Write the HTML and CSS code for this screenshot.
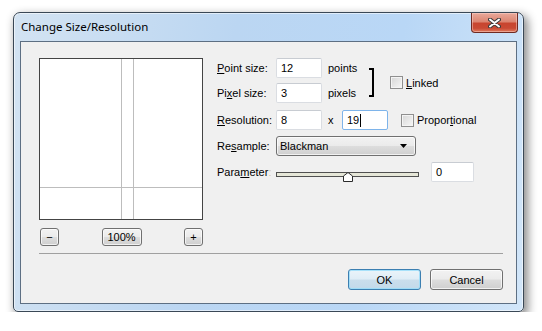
FILE: index.html
```html
<!DOCTYPE html>
<html lang="en">
<head>
    <meta charset="UTF-8">
    <title>Change Size/Resolution</title>
    <link rel="stylesheet" href="styles.css">
</head>
<body>
    <div class="window">
        <div class="titlebar">
            <span class="title">Change Size/Resolution</span>
            <button class="close" title="Close">
                <svg width="13" height="10" viewBox="0 0 13 10">
                    <path d="M2 1.5 L11 8.5 M11 1.5 L2 8.5" stroke="#3b3b3b" stroke-width="4" stroke-linecap="round"/>
                    <path d="M2 1.5 L11 8.5 M11 1.5 L2 8.5" stroke="#fff" stroke-width="2" stroke-linecap="round"/>
                </svg>
            </button>
        </div>

        <div class="client">
            <div class="main">
                <!-- glyph preview -->
                <div class="preview-col">
                    <div class="preview">
                        <svg width="162" height="160">
                            <line x1="81.5" y1="0" x2="81.5" y2="160" stroke="#bdbdbd"/>
                            <line x1="93.5" y1="0" x2="93.5" y2="160" stroke="#bdbdbd"/>
                            <line x1="0" y1="128.5" x2="162" y2="128.5" stroke="#bdbdbd"/>
                        </svg>
                    </div>
                    <div class="zoom-row">
                        <button class="btn small">&minus;</button>
                        <button class="btn small wide">100%</button>
                        <button class="btn small">+</button>
                    </div>
                </div>

                <div class="form">
                    <div class="linked-group">
                        <div class="rows">
                            <div class="row">
                                <span class="label"><u>P</u>oint size:</span>
                                <span class="field">12</span>
                                <span class="unit">points</span>
                            </div>
                            <div class="row second">
                                <span class="label">Pi<u>x</u>el size:</span>
                                <span class="field">3</span>
                                <span class="unit">pixels</span>
                            </div>
                        </div>
                        <div class="bracket"></div>
                        <label class="check linked"><span class="box"></span><u>L</u>inked</label>
                    </div>

                    <div class="row res">
                        <span class="label"><u>R</u>esolution:</span>
                        <span class="field">8</span>
                        <span class="times">x</span>
                        <span class="field focus">19<span class="caret"></span></span>
                        <label class="check prop"><span class="box"></span>Propor<u>t</u>ional</label>
                    </div>

                    <div class="row gap6">
                        <span class="label">Re<u>s</u>ample:</span>
                        <div class="select">
                            <span>Blackman</span>
                            <svg width="7" height="4" viewBox="0 0 7 4"><path d="M0 0 H7 L3.5 4 Z" fill="#000"/></svg>
                        </div>
                    </div>

                    <div class="row gap6">
                        <span class="label">Para<u>m</u>eter<span class="colon">:</span></span>
                        <div class="slider">
                            <div class="track"></div>
                            <svg class="thumb" width="10" height="10" viewBox="0 0 10 10">
                                <path d="M0.5 4 L5 0.5 L9.5 4 V9.5 H0.5 Z" fill="#fff" stroke="#2b2b2b"/>
                            </svg>
                        </div>
                        <span class="field param">0</span>
                    </div>
                </div>
            </div>

            <div class="separator"></div>

            <div class="actions">
                <button class="btn default">OK</button>
                <button class="btn">Cancel</button>
            </div>
        </div>
    </div>
</body>
</html>
```

FILE: styles.css
```css
body {
    margin: 0;
    padding: 12px 0 0 13px;
    background: #fff;
    font-family: "Liberation Sans", Arial, sans-serif;
    font-size: 11px;
    color: #000;
}

.window {
    box-sizing: border-box;
    width: 511px;
    height: 300px;
    border: 1px solid #3a4856;
    border-radius: 7px 7px 5px 5px;
    background: linear-gradient(100deg, #d3e3f2 0%, #bbd6f2 40%, #b9d7f6 70%, #d2e6f9 100%);
    box-shadow: inset 0 0 0 1px rgba(255, 255, 255, 0.55), 3px 4px 10px 1px rgba(0, 0, 0, 0.45);
}

.titlebar {
    height: 28px;
    display: flex;
    justify-content: space-between;
    align-items: flex-start;
}

.title {
    font-family: "Noto Sans", sans-serif;
    font-size: 11.5px;
    line-height: 28px;
    padding-left: 7px;
    color: #000;
}

.close {
    width: 47px;
    height: 20px;
    margin-right: 5px;
    padding: 0;
    border: 1px solid #6f2a22;
    border-top: none;
    border-radius: 0 0 4px 4px;
    background: linear-gradient(#e9a99b 0%, #dc8672 45%, #c8452f 55%, #c94a34 80%, #e07b5f 100%);
    box-shadow: inset 0 0 0 1px rgba(255, 220, 210, 0.45);
    display: flex;
    align-items: center;
    justify-content: center;
}

.client {
    box-sizing: border-box;
    width: 497px;
    height: 263px;
    margin: 0 6px 0 6px;
    border: 1px solid #5d6f83;
    background: #f0f0f0;
}

.main {
    display: flex;
    padding: 16px 0 0 18px;
}

.preview-col {
    width: 164px;
}

.preview {
    width: 162px;
    height: 160px;
    border: 1px solid #444;
    background: #fff;
}

.preview svg {
    display: block;
}

.zoom-row {
    display: flex;
    justify-content: space-between;
    margin-top: 8px;
    padding-left: 1px;
}

.btn {
    box-sizing: border-box;
    width: 73px;
    height: 21px;
    padding: 0;
    border: 1px solid #707070;
    border-radius: 3px;
    background: linear-gradient(#f2f2f2 0%, #ebebeb 48%, #dddddd 52%, #cfcfcf 100%);
    box-shadow: inset 0 0 0 1px rgba(255, 255, 255, 0.7);
    font-family: "Liberation Sans", Arial, sans-serif;
    font-size: 11px;
    color: #000;
}

.btn.small {
    width: 19px;
    height: 18px;
    font-size: 11px;
    line-height: 14px;
}

.btn.small.wide {
    width: 40px;
}

.btn.default {
    border-color: #3c7fb1;
    background: linear-gradient(#eaf4fa 0%, #dfedf6 48%, #cadeec 52%, #c2d9ea 100%);
    box-shadow: inset 0 0 0 1px rgba(150, 220, 250, 0.8);
}

.form {
    margin-left: 14px;
}

.linked-group {
    display: flex;
    align-items: flex-start;
}

.rows {
    width: 152px;
}

.row {
    display: flex;
    align-items: center;
    height: 20px;
}

.row.second {
    margin-top: 5px;
}

.row.res {
    margin-top: 7px;
}

.row.gap6 {
    margin-top: 6px;
}

.label {
    width: 59px;
    flex-shrink: 0;
}

.colon {
    color: #d9c9a0;
}

.field {
    box-sizing: border-box;
    width: 46px;
    height: 20px;
    padding: 0 4px;
    border: 1px solid #dadde2;
    border-top-color: #c8ccd2;
    border-radius: 2px;
    background: #fff;
    line-height: 18px;
    display: flex;
    align-items: center;
}

.field.focus {
    border-color: #7eb4ea;
}

.caret {
    width: 1px;
    height: 13px;
    margin-left: 1px;
    background: #000;
}

.field.param {
    width: 43px;
    margin-left: 12px;
}

.unit {
    margin-left: 6px;
}

.times {
    width: 20px;
    padding-left: 6px;
    box-sizing: border-box;
}

.bracket {
    width: 3px;
    height: 25px;
    margin-top: 10px;
    border: 2px solid #000;
    border-left: none;
}

.check {
    display: flex;
    align-items: center;
}

.check .box {
    box-sizing: border-box;
    width: 13px;
    height: 13px;
    margin-right: 3px;
    border: 1px solid #8f8f8f;
    background: linear-gradient(135deg, #d6d6d6, #f7f7f7);
    box-shadow: inset 0 0 0 1px #f4f4f4;
}

.check.linked {
    margin: 18px 0 0 16px;
}

.check.prop {
    margin-left: 13px;
}

.select {
    box-sizing: border-box;
    width: 140px;
    height: 20px;
    padding: 0 8px 0 3px;
    border: 1px solid #707070;
    border-radius: 3px;
    background: linear-gradient(#f2f2f2 0%, #ebebeb 48%, #dddddd 52%, #cfcfcf 100%);
    box-shadow: inset 0 0 0 1px rgba(255, 255, 255, 0.7);
    display: flex;
    align-items: center;
    justify-content: space-between;
}

.slider {
    position: relative;
    width: 143px;
    height: 20px;
}

.track {
    box-sizing: border-box;
    margin-top: 10px;
    height: 5px;
    border: 1px solid #505050;
    background: #e6e7d8;
}

.thumb {
    position: absolute;
    left: 67px;
    top: 10px;
}

.separator {
    margin: 7px 13px 0 18px;
    height: 1px;
    background: #a0a0a0;
}

.actions {
    display: flex;
    justify-content: flex-end;
    gap: 9px;
    margin: 15px 13px 0 0;
}
```
